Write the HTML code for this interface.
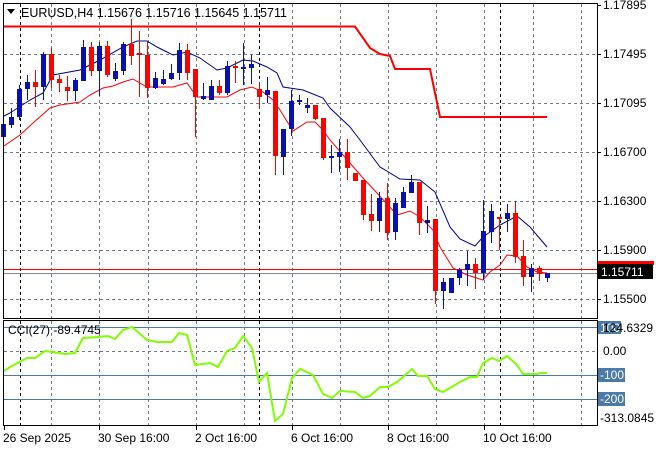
<!DOCTYPE html>
<html><head><meta charset="utf-8"><style>
html,body{margin:0;padding:0;background:#fff;width:660px;height:450px;overflow:hidden}
svg{display:block;font-family:"Liberation Sans",sans-serif;font-size:12px}
</style></head><body>
<svg id="s" width="660" height="450" xmlns="http://www.w3.org/2000/svg">
<rect x="0" y="0" width="660" height="450" fill="#fff"/>
<g id="grid" stroke="#707a8a" stroke-width="1" stroke-dasharray="3,3" fill="none"></g>
<g id="cci"></g>
<g id="main"></g>
<rect x="3.5" y="3.5" width="594" height="315" fill="none" stroke="#000"/>
<rect x="3.5" y="320.5" width="594" height="105" fill="none" stroke="#000"/>
<text x="21" y="17" font-size="12.5" fill="#000">EURUSD,H4  1.15676 1.15716 1.15645 1.15711</text>
<polygon points="7,9 15,9 11,14" fill="#000"/>
<text x="8" y="334" fill="#000">CCI(27) -89.4745</text>
<g id="axis" fill="#000"></g>
</svg>
<script>
var NS="http://www.w3.org/2000/svg";
function el(p,t,a,txt){var e=document.createElementNS(NS,t);for(var k in a)e.setAttribute(k,a[k]);if(txt!=null)e.textContent=txt;document.getElementById(p).appendChild(e);return e;}
var gx=[51,99,148,196,244,292,340,388,436,484,533,581];
gx.forEach(function(x){el('grid','line',{x1:x+.5,y1:4,x2:x+.5,y2:318});el('grid','line',{x1:x+.5,y1:321,x2:x+.5,y2:425});});
[20,259,500].forEach(function(x){el('grid','line',{x1:x+.5,y1:4,x2:x+.5,y2:318,stroke:'#000'});el('grid','line',{x1:x+.5,y1:321,x2:x+.5,y2:425,stroke:'#000'});});
[54,103,152,201,250,299].forEach(function(y){el('grid','line',{x1:4,y1:y+.5,x2:597,y2:y+.5});});
el('grid','line',{x1:4,y1:351.5,x2:597,y2:351.5});
[327,375,399].forEach(function(y){el('cci','line',{x1:4,y1:y+.5,x2:597,y2:y+.5,stroke:'#4a7aa8','stroke-width':1});});
var cp=[[4,371],[10,367],[27,358],[35,358],[45,351],[52,352],[65,354],[75,353],[83,338],[98,337],[108,336],[115,339],[123,330],[132,327],[147,340],[157,342],[172,342],[179,333],[187,335],[195,365],[210,363],[218,367],[227,351],[235,348],[243,336],[252,348],[259,382],[267,373],[275,421],[283,414],[292,378],[300,369],[313,375],[323,394],[332,398],[340,391],[355,392],[363,398],[370,396],[380,387],[388,387],[397,382],[412,369],[418,376],[427,376],[435,389],[443,392],[460,382],[470,377],[477,377],[483,363],[492,358],[499,361],[507,356],[517,365],[523,374],[537,374],[540,373],[547,373]];
el('cci','polyline',{points:cp.join(' '),fill:'none',stroke:'#7fff00','stroke-width':2});
el('main','line',{x1:4,y1:269.5,x2:597,y2:269.5,stroke:'#ff0000'});
el('main','line',{x1:4,y1:273.5,x2:597,y2:273.5,stroke:'#808890'});
el('main','polyline',{points:'4,26.5 355,26.5 370,48 380,54 390,56 395,69 430,69 440,117 547,117',fill:'none',stroke:'#f00','stroke-width':2});
var nv=[[4,116],[10,113],[30,100],[43,93],[53,75],[80,70],[100,60],[123,47],[137,41],[147,41],[157,47],[173,55],[187,52],[200,58],[217,70],[227,68],[243,60],[253,61],[267,67],[277,73],[283,87],[303,90],[323,98],[330,108],[350,127],[360,140],[380,167],[400,179],[420,180],[435,192],[450,227],[460,239],[475,246],[483,237],[500,225],[517,216],[530,227],[547,247]];
var rd=[[4,146],[20,135],[33,123],[50,108],[60,105],[80,102],[90,95],[103,88],[113,86],[123,82],[133,79],[138,82],[147,87],[173,87],[187,83],[197,97],[227,97],[240,90],[252,87],[263,92],[273,100],[280,110],[293,131],[307,122],[315,122],[323,130],[330,140],[350,163],[363,178],[377,193],[397,215],[410,211],[420,217],[433,230],[440,247],[453,268],[467,275],[483,280],[490,272],[500,265],[507,255],[517,256],[527,267],[537,272],[547,273]];
el('main','polyline',{points:nv.join(' '),fill:'none',stroke:'#00008b','stroke-width':1});
el('main','polyline',{points:rd.join(' '),fill:'none',stroke:'#f00','stroke-width':1});
var C=[[124,137,120,140,0],[117,125,108,128,0],[89,117,85,120,0],[82,89,75,100,0],[82,87,70,107,1],[54,87,52,100,0],[54,80,48,88,1],[79,83,75,92,1],[87,91,76,101,1],[80,91,78,101,0],[47,81,40,81,0],[47,71,42,76,1],[46,71,42,96,0],[46,75,41,77,1],[71,79,63,81,0],[44,71,42,75,0],[44,56,19,65,1],[53,55,31,97,1],[55,88,42,98,1],[78,88,72,89,0],[79,84,70,85,0],[73,79,64,80,0],[50,73,43,80,0],[50,73,44,80,1],[69,97,69,137,1],[96,99,83,100,0],[86,100,80,100,0],[86,93,80,95,1],[66,93,61,95,0],[66,68,61,83,1],[67,68,43,85,0],[64,68,55,84,0],[89,97,82,109,1],[90,95,77,103,0],[91,156,91,175,1],[129,157,129,175,0],[101,129,90,136,0],[100,101,95,105,0],[105,108,98,113,0],[105,119,105,120,1],[118,158,118,160,1],[156,158,145,173,0],[152,157,139,172,0],[152,168,139,180,1],[173,181,173,181,1],[180,215,180,220,1],[214,221,194,231,1],[198,221,192,232,0],[198,233,183,240,1],[203,232,198,240,0],[192,208,187,208,0],[182,193,175,193,0],[182,223,182,235,1],[220,223,206,233,0],[219,291,219,304,1],[282,291,278,309,0],[278,293,278,293,0],[270,278,268,285,0],[264,270,251,286,0],[264,273,258,289,1],[231,273,200,280,0],[211,232,204,243,0],[217,219,217,250,1],[213,219,204,232,0],[213,257,201,263,1],[256,277,240,286,1],[268,277,264,292,0],[268,274,266,281,1],[273,278,273,282,0]];
C.forEach(function(c,i){var x=Math.round(3+8*i);var col=c[4]?'#ff0000':'#0a0fb4';
 el('main','rect',{x:x,y:c[2],width:1,height:Math.max(1,c[3]-c[2]),fill:col});
 var h=Math.max(2,c[1]-c[0]);el('main','rect',{x:x-2,y:c[0],width:5,height:h,fill:col});});
var pl=[[5,'1.17895'],[54,'1.17495'],[103,'1.17095'],[152,'1.16700'],[201,'1.16300'],[250,'1.15900'],[299,'1.15500']];
pl.forEach(function(p){el('axis','line',{x1:597,y1:p[0]+.5,x2:601,y2:p[0]+.5,stroke:'#000'});el('axis','text',{x:603,y:p[0]+4},p[1]);});
el('axis','rect',{x:598,y:261,width:56,height:4,fill:'#f00'});
el('axis','rect',{x:598,y:264,width:55,height:15,fill:'#000'});
el('axis','text',{x:601,y:276,fill:'#fff'},'1.15711');
el('axis','rect',{x:598,y:321,width:23,height:13,fill:'#4a7aa8'});
el('axis','text',{x:600,y:332,fill:'#fff'},'100');
el('axis','text',{x:603,y:332},'124.6329');
el('axis','text',{x:603,y:355},'0.00');
el('axis','rect',{x:598,y:368,width:27,height:14,fill:'#4a7aa8'});
el('axis','text',{x:600,y:379,fill:'#fff'},'-100');
el('axis','rect',{x:598,y:392,width:27,height:14,fill:'#4a7aa8'});
el('axis','text',{x:600,y:403,fill:'#fff'},'-200');
el('axis','text',{x:600,y:422},'-313.0845');
var dl=[[4,'26 Sep 2025'],[99,'30 Sep 16:00'],[196,'2 Oct 16:00'],[292,'6 Oct 16:00'],[388,'8 Oct 16:00'],[484,'10 Oct 16:00']];
dl.forEach(function(d){el('axis','line',{x1:d[0]+.5,y1:425,x2:d[0]+.5,y2:430,stroke:'#000'});el('axis','text',{x:d[0]-1,y:442},d[1]);});
</script>
</body></html>
